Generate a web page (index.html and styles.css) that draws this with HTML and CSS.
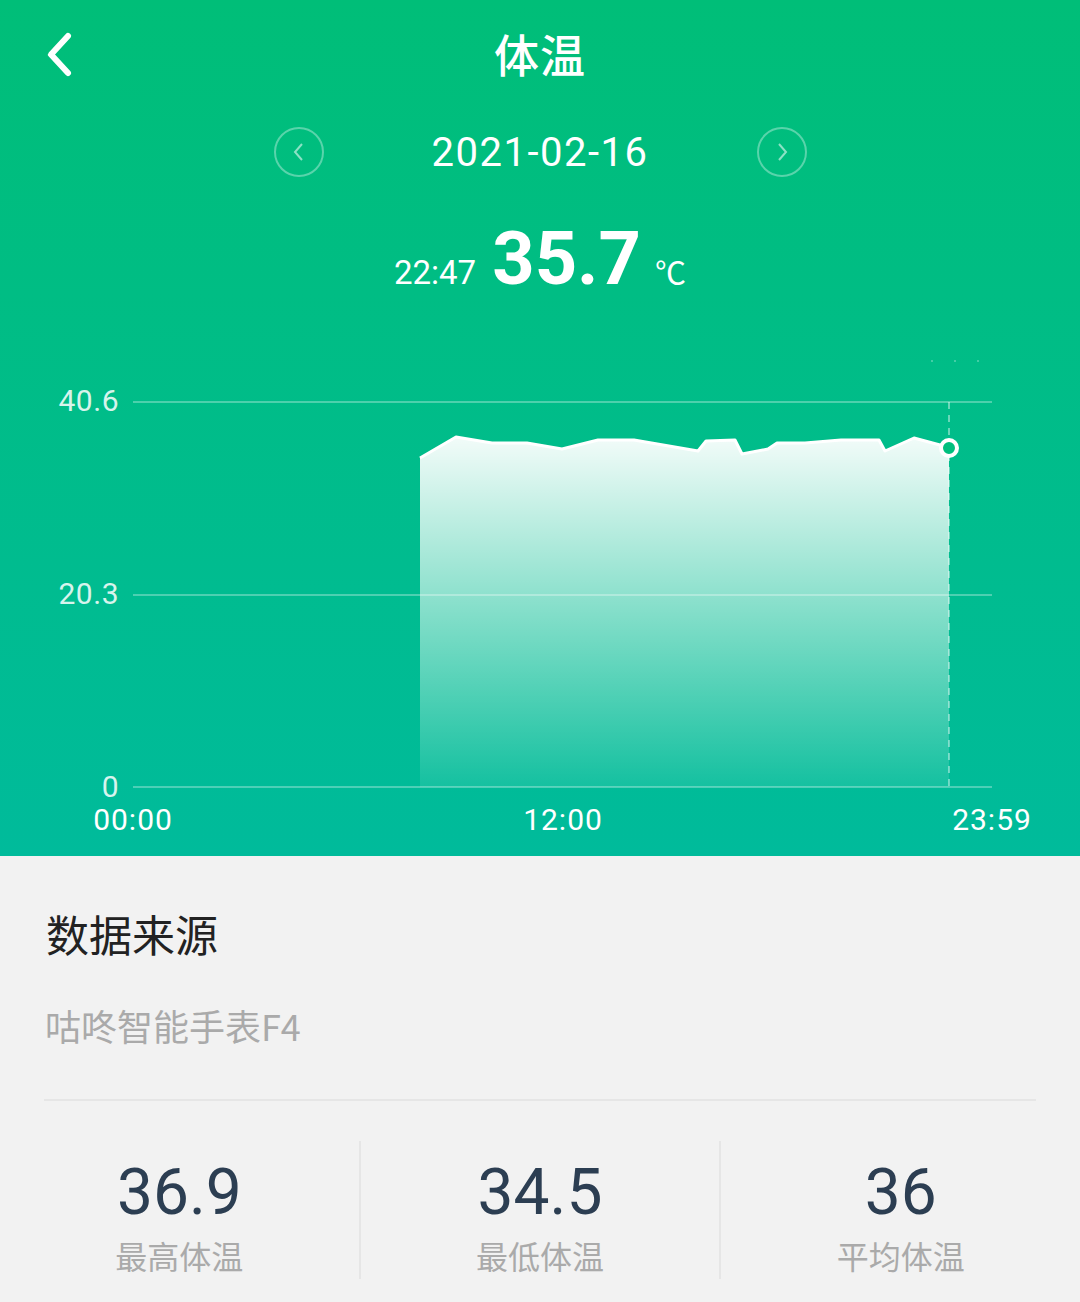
FILE: index.html
```html
<!DOCTYPE html>
<html lang="zh">
<head>
  <meta charset="UTF-8">
  <meta name="viewport" content="width=device-width, initial-scale=1.0">
  <title>体温</title>
  <link rel="stylesheet" href="styles.css">
</head>
<body>
  <div class="top">
    <div class="nav">
      <svg class="back" width="40" height="50" viewBox="0 0 40 50">
        <polyline points="24,6 7,24.5 24,43" fill="none" stroke="#fff" stroke-width="6" stroke-linecap="round" stroke-linejoin="round"/>
      </svg>
      <h1>体温</h1>
    </div>

    <div class="date-row">
      <div class="circle">
        <svg width="20" height="24" viewBox="0 0 20 24"><polyline points="13,4 6,12 13,20" fill="none" stroke="rgba(255,255,255,0.55)" stroke-width="2"/></svg>
      </div>
      <div class="date">2021-02-16</div>
      <div class="circle">
        <svg width="20" height="24" viewBox="0 0 20 24"><polyline points="7,4 14,12 7,20" fill="none" stroke="rgba(255,255,255,0.55)" stroke-width="2"/></svg>
      </div>
    </div>

    <div class="reading">
      <span class="time">22:47</span>
      <span class="value">35.7</span>
      <span class="unit">℃</span>
    </div>

    <svg class="chart" width="1080" height="516" viewBox="0 0 1080 516">
      <defs>
        <linearGradient id="fill" x1="0" y1="0" x2="0" y2="1">
          <stop offset="0" stop-color="#ffffff" stop-opacity="0.95"/>
          <stop offset="1" stop-color="#ffffff" stop-opacity="0.08"/>
        </linearGradient>
      </defs>

      <circle cx="932" cy="21" r="1" fill="rgba(255,255,255,0.35)"/>
      <circle cx="955" cy="21" r="1" fill="rgba(255,255,255,0.35)"/>
      <circle cx="978" cy="21" r="1" fill="rgba(255,255,255,0.35)"/>

      <line x1="133" y1="62" x2="992" y2="62" class="grid"/>
      <line x1="133" y1="255" x2="992" y2="255" class="grid"/>
      <line x1="133" y1="447" x2="992" y2="447" class="grid"/>

      <text x="119" y="71" class="ylabel">40.6</text>
      <text x="119" y="264" class="ylabel">20.3</text>
      <text x="119" y="457" class="ylabel">0</text>

      <polygon fill="url(#fill)" points="420,118 456,97 492,103 527,103 562,109 598,100 634,100 698,111 706,101 735,100 742,114 768,109 777,103 805,103 841,100 879,100 885,111 914,98 940,105 949,108 949,447 420,447"/>
      <polyline fill="none" stroke="#fff" stroke-width="3" stroke-linejoin="round" points="420,118 456,97 492,103 527,103 562,109 598,100 634,100 698,111 706,101 735,100 742,114 768,109 777,103 805,103 841,100 879,100 885,111 914,98 940,105 949,108"/>

      <line x1="949" y1="62" x2="949" y2="447" stroke="rgba(255,255,255,0.55)" stroke-width="1.5" stroke-dasharray="7 6"/>
      <circle cx="949" cy="108" r="8" fill="#00bf7e" stroke="#fff" stroke-width="4"/>

      <text x="133" y="490" class="xlabel">00:00</text>
      <text x="563" y="490" class="xlabel">12:00</text>
      <text x="992" y="490" class="xlabel">23:59</text>
    </svg>
  </div>

  <div class="source">
    <h2>数据来源</h2>
    <p>咕咚智能手表F4</p>
  </div>

  <div class="stats">
    <div class="stat">
      <div class="num">36.9</div>
      <div class="label">最高体温</div>
    </div>
    <div class="stat">
      <div class="num">34.5</div>
      <div class="label">最低体温</div>
    </div>
    <div class="stat">
      <div class="num">36</div>
      <div class="label">平均体温</div>
    </div>
  </div>
</body>
</html>
```

FILE: styles.css
```css
* {
  box-sizing: border-box;
}

body {
  margin: 0;
  width: 1080px;
  height: 1302px;
  overflow: hidden;
  background-color: #f2f2f2;
  font-family: Roboto, "Noto Sans CJK SC", sans-serif;
}

.top {
  height: 856px;
  background: linear-gradient(180deg, #00be78 0%, #00bb9b 100%);
  color: #fff;
}

.nav {
  position: relative;
  height: 106px;
  display: flex;
  align-items: center;
  justify-content: center;
}

.back {
  position: absolute;
  left: 44px;
  top: 30px;
}

.nav h1 {
  margin: 0;
  font-size: 45px;
  font-weight: 500;
  font-family: "Noto Sans CJK SC", sans-serif;
  letter-spacing: 1px;
}

.date-row {
  margin-top: 21px;
  height: 50px;
  display: flex;
  align-items: center;
  justify-content: center;
}

.circle {
  width: 50px;
  height: 50px;
  border: 2px solid rgba(255, 255, 255, 0.35);
  border-radius: 50%;
  display: flex;
  align-items: center;
  justify-content: center;
}

.date {
  width: 433px;
  text-align: center;
  font-size: 40px;
  letter-spacing: 1.5px;
}

.reading {
  height: 163px;
  display: flex;
  align-items: baseline;
  justify-content: center;
  padding-top: 38px;
}

.time {
  font-size: 33px;
  margin-right: 16px;
}

.value {
  font-size: 74px;
  font-weight: 700;
  line-height: 88px;
  margin-right: 14px;
}

.unit {
  font-size: 31px;
}

.chart {
  display: block;
}

.grid {
  stroke: rgba(255, 255, 255, 0.3);
  stroke-width: 2;
}

.ylabel {
  fill: rgba(255, 255, 255, 0.85);
  font-size: 30px;
  letter-spacing: 0.5px;
  text-anchor: end;
  font-family: Roboto, sans-serif;
}

.xlabel {
  fill: #fff;
  font-size: 30px;
  letter-spacing: 1px;
  text-anchor: middle;
  font-family: Roboto, sans-serif;
}

.source {
  margin: 0 44px;
  padding-top: 47px;
  height: 245px;
  border-bottom: 2px solid #e6e6e6;
}

.source h2 {
  margin: 0 0 0 2px;
  font-size: 43px;
  font-weight: 400;
  color: #222;
  line-height: 60px;
  font-family: "Noto Sans CJK SC", sans-serif;
}

.source p {
  margin: 37px 0 0 1px;
  font-size: 36px;
  color: #aaa;
  line-height: 50px;
  font-family: "Noto Sans CJK SC", sans-serif;
}

.stats {
  display: flex;
  padding-top: 40px;
}

.stat {
  flex: 1;
  height: 138px;
  text-align: center;
  border-left: 2px solid #e6e6e6;
}

.stat:first-child {
  border-left: none;
}

.num {
  font-size: 64px;
  color: #2c3e52;
  line-height: 80px;
  padding-top: 12px;
}

.label {
  font-size: 32px;
  color: #aaa;
  line-height: 44px;
  font-family: "Noto Sans CJK SC", sans-serif;
}
```
